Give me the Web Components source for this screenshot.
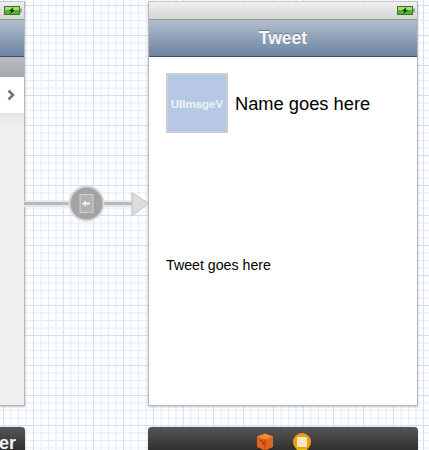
<!DOCTYPE html>
<html>
<head>
<meta charset="utf-8">
<title>Storyboard</title>
<style>
    html, body { margin: 0; padding: 0; background: #fff; overflow: hidden; }
</style>
</head>
<body>
<story-board>
    <phone-scene slot="scene" id="left" title="" style="left:-244px;top:1px;width:269px">
        <table-stub></table-stub>
    </phone-scene>
    <phone-scene slot="scene" id="right" title="Tweet" style="left:148px;top:1px;width:270px">
        <tweet-detail></tweet-detail>
    </phone-scene>
    <segue-arrow></segue-arrow>
    <scene-dock label="er" style="left:-244px;width:269px"></scene-dock>
    <scene-dock style="left:148px;width:270px" icons></scene-dock>
</story-board>

<script>
class StoryBoard extends HTMLElement {
    constructor() {
        super();
        this.attachShadow({ mode: 'open' });
    }

    connectedCallback() {
        this.shadowRoot.innerHTML = `
            <style>
                :host {
                    display: block;
                    position: relative;
                    width: 429px;
                    height: 450px;
                    overflow: hidden;
                    background-color: #fff;
                    background-image:
                        linear-gradient(to right, #cfe0f8 1px, transparent 1px),
                        linear-gradient(to bottom, #cfe0f8 1px, transparent 1px),
                        linear-gradient(to right, #e2ecfb 1px, transparent 1px),
                        linear-gradient(to bottom, #e2ecfb 1px, transparent 1px);
                    background-size: 30px 30px, 30px 30px, 7.5px 7.5px, 7.5px 7.5px;
                    background-position: 3px 0, 0 5px, 3px 0, 0 5px;
                }
            </style>
            <slot name="scene"></slot>
            <slot></slot>
        `;
    }
}

class PhoneScene extends HTMLElement {
    constructor() {
        super();
        this.attachShadow({ mode: 'open' });
    }

    connectedCallback() {
        const title = this.getAttribute('title') || '';
        this.shadowRoot.innerHTML = `
            <style>
                :host {
                    position: absolute;
                    display: flex;
                    flex-direction: column;
                    height: 405px;
                    box-sizing: border-box;
                    border: 1px solid #b4b6ba;
                    border-top-color: #c6c8cb;
                    box-shadow: 0 1px 2px rgba(0,0,0,0.22);
                    background: #fff;
                }
                .status {
                    flex: none;
                    height: 17px;
                    display: flex;
                    justify-content: flex-end;
                    align-items: center;
                    padding-right: 2px;
                    background: linear-gradient(#eef0ef, #d3d6d5);
                    border-bottom: 1px solid #8d9290;
                }
                .nav {
                    flex: none;
                    height: 37px;
                    box-sizing: border-box;
                    display: flex;
                    align-items: center;
                    justify-content: center;
                    background: linear-gradient(#b2bdce, #6d84a2);
                    border-bottom: 1px solid #3f5068;
                    font: bold 17.5px "Liberation Sans", Arial, sans-serif;
                    color: #f4f6f9;
                    text-shadow: 0 -1px 0 rgba(60,75,100,0.5);
                }
                .body {
                    flex: 1;
                    min-height: 0;
                    display: flex;
                    flex-direction: column;
                }
                svg { display: block; }
            </style>
            <div class="status">
                <svg width="18" height="9" viewBox="0 0 18 9">
                    <rect x="0.5" y="0.5" width="15" height="8" fill="#4fb81f" stroke="#4c6a3c"/>
                    <rect x="1" y="1" width="14" height="3" fill="#9be36a"/>
                    <rect x="16" y="2.5" width="2" height="4" fill="#9aa09e"/>
                    <path d="M9.5 1 L5 5 H7.5 L6 8 L11 4 H8.5 Z" fill="#14240e"/>
                </svg>
            </div>
            <div class="nav">${title}</div>
            <div class="body"><slot></slot></div>
        `;
    }
}

class TableStub extends HTMLElement {
    constructor() {
        super();
        this.attachShadow({ mode: 'open' });
    }

    connectedCallback() {
        this.shadowRoot.innerHTML = `
            <style>
                :host {
                    flex: 1;
                    display: flex;
                    flex-direction: column;
                    background: #efefef;
                }
                .band {
                    height: 20px;
                    background: linear-gradient(#b6bcc0, #a4abb0);
                }
                .row {
                    height: 36px;
                    background: #fff;
                    display: flex;
                    justify-content: flex-end;
                    align-items: center;
                    padding-right: 9px;
                }
                .fill {
                    flex: 1;
                    background: linear-gradient(#e2e2e2, #efefef 10px);
                }
                svg { display: block; }
            </style>
            <div class="band"></div>
            <div class="row">
                <svg width="8" height="12" viewBox="0 0 8 12">
                    <path d="M1.5 1.5 L6 6 L1.5 10.5" fill="none" stroke="#71757a" stroke-width="2.6"/>
                </svg>
            </div>
            <div class="fill"></div>
        `;
    }
}

class TweetDetail extends HTMLElement {
    constructor() {
        super();
        this.attachShadow({ mode: 'open' });
    }

    connectedCallback() {
        this.shadowRoot.innerHTML = `
            <style>
                :host {
                    flex: 1;
                    display: flex;
                    flex-direction: column;
                    padding: 16px 0 0 17px;
                    font-family: "Liberation Sans", Arial, sans-serif;
                    color: #000;
                }
                .head {
                    display: flex;
                    align-items: center;
                    gap: 7px;
                }
                .image {
                    width: 62px;
                    height: 60px;
                    box-sizing: border-box;
                    border: 2px solid #ccd0d6;
                    padding-top: 2px;
                    background: #b6c8e4;
                    display: flex;
                    align-items: center;
                    justify-content: center;
                    overflow: hidden;
                    font-size: 11.5px;
                    font-weight: bold;
                    color: #eef2f9;
                    white-space: nowrap;
                }
                .name { font-size: 18.3px; padding-top: 2px; }
                .text {
                    margin-top: 124px;
                    font-size: 14.2px;
                }
            </style>
            <div class="head">
                <div class="image">UIImageV</div>
                <div class="name">Name goes here</div>
            </div>
            <div class="text">Tweet goes here</div>
        `;
    }
}

class SegueArrow extends HTMLElement {
    constructor() {
        super();
        this.attachShadow({ mode: 'open' });
    }

    connectedCallback() {
        this.shadowRoot.innerHTML = `
            <style>
                :host {
                    position: absolute;
                    left: 24px;
                    top: 184px;
                    width: 125px;
                    height: 40px;
                }
                svg { display: block; }
            </style>
            <svg width="125" height="40" viewBox="0 0 125 40">
                <rect x="0" y="17" width="110" height="6" fill="#e6e6e6"/>
                <rect x="0" y="18" width="110" height="3" fill="#b8b8b8"/>
                <path d="M108 8.5 L124.5 19.5 L108 32 Z" fill="#dcdcdc" stroke="#c4c4c4"/>
                <circle cx="62.5" cy="19.5" r="18" fill="#d8d8d8"/>
                <circle cx="62.5" cy="19.5" r="16" fill="#a3a3a3"/>
                <rect x="56" y="10.5" width="13" height="18" fill="#b2b2b2" stroke="#d0d0d0"/>
                <path d="M58 19.5 L62 16.5 V18.5 H66 V20.5 H62 V22.5 Z" fill="#f4f4f4"/>
            </svg>
        `;
    }
}

class SceneDock extends HTMLElement {
    constructor() {
        super();
        this.attachShadow({ mode: 'open' });
    }

    connectedCallback() {
        const label = this.getAttribute('label') || '';
        const icons = this.hasAttribute('icons') ? `
            <div class="icons">
                <svg width="18" height="18" viewBox="0 0 18 18">
                    <path d="M9 0.5 L17 3.5 V14 L9 17.5 L1 14 V3.5 Z" fill="#e2641c"/>
                    <path d="M1 3.5 L9 0.5 L17 3.5 L9 6.5 Z" fill="#f08a3c"/>
                    <path d="M9 6.5 V17.5" stroke="#a83e0c"/>
                    <path d="M3.5 7 L7 8.5 V12" fill="none" stroke="#8e3208"/>
                </svg>
                <svg width="18" height="18" viewBox="0 0 18 18">
                    <circle cx="9" cy="9" r="9" fill="#eca00e"/>
                    <path d="M4 16 H14 V18 H4 Z" fill="#e6d40c"/>
                    <rect x="4" y="4" width="10" height="10" rx="1" fill="#f7e6c4"/>
                </svg>
            </div>` : '';
        this.shadowRoot.innerHTML = `
            <style>
                :host {
                    position: absolute;
                    top: 427px;
                    height: 40px;
                    box-sizing: border-box;
                    border-radius: 4px 4px 0 0;
                    background: linear-gradient(#565656, #2e2e2e 24px);
                    box-shadow: 0 0 1px rgba(0,0,0,0.5);
                    display: flex;
                    justify-content: flex-end;
                }
                .label {
                    font: bold 18px "Liberation Sans", Arial, sans-serif;
                    color: #f2f2f2;
                    padding: 6px 9px 0 0;
                }
                .icons {
                    width: 100%;
                    display: flex;
                    justify-content: center;
                    gap: 19px;
                    padding: 6px 0 0 1px;
                    box-sizing: border-box;
                }
                svg { display: block; }
            </style>
            ${label ? `<div class="label">${label}</div>` : ''}
            ${icons}
        `;
    }
}

customElements.define('story-board', StoryBoard);
customElements.define('phone-scene', PhoneScene);
customElements.define('table-stub', TableStub);
customElements.define('tweet-detail', TweetDetail);
customElements.define('segue-arrow', SegueArrow);
customElements.define('scene-dock', SceneDock);
</script>
</body>
</html>
